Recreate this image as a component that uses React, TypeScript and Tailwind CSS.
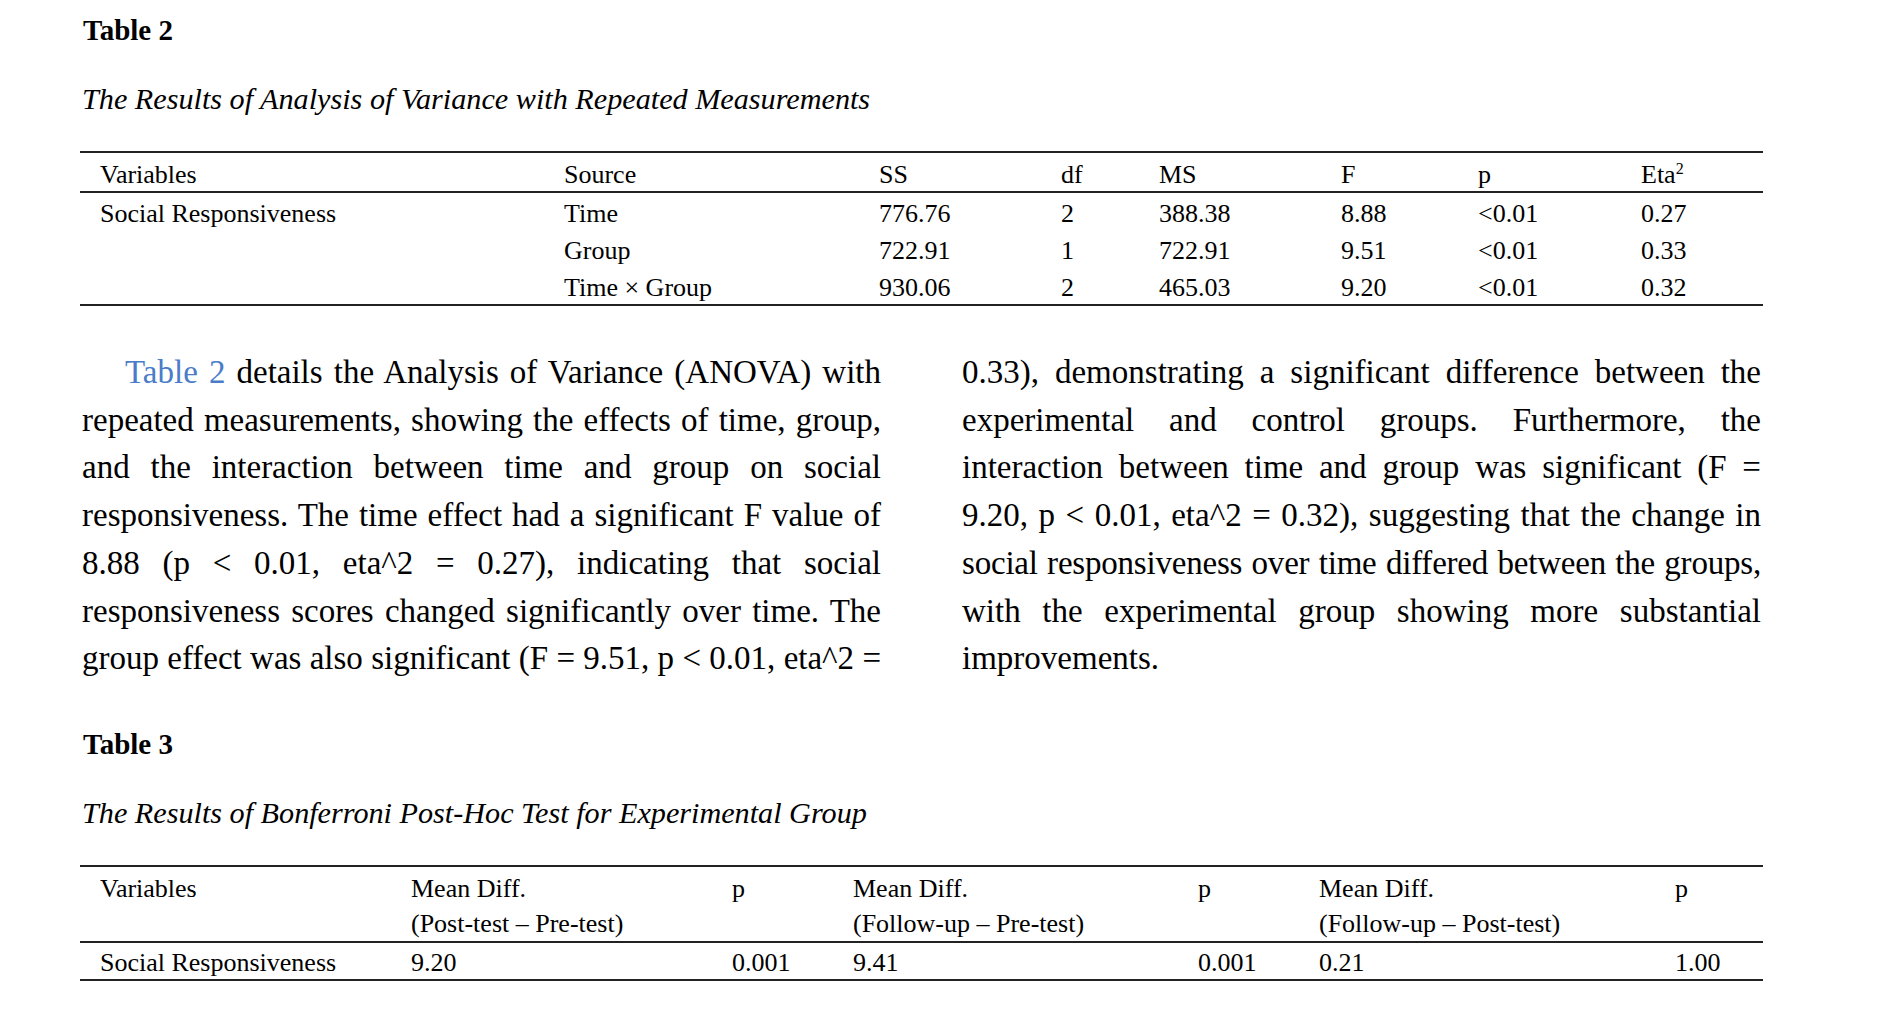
import React from "react";

const t2Header = ["Variables", "Source", "SS", "df", "MS", "F", "p"];
const t2Rows = [
  ["Social Responsiveness", "Time", "776.76", "2", "388.38", "8.88", "<0.01", "0.27"],
  ["", "Group", "722.91", "1", "722.91", "9.51", "<0.01", "0.33"],
  ["", "Time × Group", "930.06", "2", "465.03", "9.20", "<0.01", "0.32"],
];

const leftLines = [
  "details the Analysis of Variance (ANOVA) with",
  "repeated measurements, showing the effects of time, group,",
  "and the interaction between time and group on social",
  "responsiveness. The time effect had a significant F value of",
  "8.88 (p < 0.01, eta^2 = 0.27), indicating that social",
  "responsiveness scores changed significantly over time. The",
  "group effect was also significant (F = 9.51, p < 0.01, eta^2 =",
];

const rightLines = [
  "0.33), demonstrating a significant difference between the",
  "experimental and control groups. Furthermore, the",
  "interaction between time and group was significant (F =",
  "9.20, p < 0.01, eta^2 = 0.32), suggesting that the change in",
  "social responsiveness over time differed between the groups,",
  "with the experimental group showing more substantial",
];

export default function App() {
  return (
    <div className="w-[1900px] min-h-[1017px] bg-white text-black font-['Liberation_Serif','Times_New_Roman',serif]">
      <div className="ml-[80px] w-[1683px] pt-[14px]">
        {/* Table 2 */}
        <div className="pl-[3px] text-[29px] leading-[33px] font-bold">Table 2</div>
        <div className="mt-[35px] pl-[2px] text-[30.2px] leading-[34px] italic">
          The Results of Analysis of Variance with Repeated Measurements
        </div>
        <div className="mt-[35px] border-t-2 border-b-2 border-[#222] text-[26px] leading-[28px]">
          <div className="grid grid-cols-[464px_315px_182px_98px_182px_137px_163px_1fr] pl-[20px] h-[40px] pt-[8px] border-b-2 border-[#222]">
            {t2Header.map((h, i) => (
              <div key={i}>{h}</div>
            ))}
            <div>
              Eta<span className="relative -top-[9px] text-[16px]">2</span>
            </div>
          </div>
          {t2Rows.map((r, ri) => (
            <div
              key={ri}
              className="grid grid-cols-[464px_315px_182px_98px_182px_137px_163px_1fr] pl-[20px] h-[37px] pt-[7px]"
            >
              {r.map((c, ci) => (
                <div key={ci} className="whitespace-nowrap">{c}</div>
              ))}
            </div>
          ))}
        </div>

        {/* Paragraph */}
        <div className="mt-[43px] pl-[2px] grid grid-cols-[799px_799px] gap-x-[81px] text-[33px] leading-[47.7px]">
          <div>
            {leftLines.map((l, i) => (
              <div key={i} className={"text-justify [text-align-last:justify]" + (i === 0 ? " pl-[43px]" : "")}>
                {i === 0 && <span className="text-[#4a7cc9]">Table 2 </span>}
                {l}
              </div>
            ))}
          </div>
          <div>
            {rightLines.map((l, i) => (
              <div
                key={i}
                className={
                  "text-justify [text-align-last:justify] whitespace-nowrap" +
                  (i === 4 ? " [word-spacing:-3px] tracking-[-0.2px]" : "")
                }
              >
                {l}
              </div>
            ))}
            <div>improvements.</div>
          </div>
        </div>

        {/* Table 3 */}
        <div className="mt-[45.5px] pl-[3px] text-[29px] leading-[33px] font-bold">Table 3</div>
        <div className="mt-[35px] pl-[2px] text-[30.2px] leading-[34px] italic">
          The Results of Bonferroni Post-Hoc Test for Experimental Group
        </div>
        <div className="mt-[35px] border-t-2 border-b-2 border-[#222] text-[26px]">
          <div className="grid grid-cols-[311px_321px_121px_345px_121px_356px_1fr] pl-[20px] pt-[4px] leading-[35px] border-b-2 border-[#222]">
            <div>Variables</div>
            <div>
              Mean Diff.
              <br />
              (Post-test – Pre-test)
            </div>
            <div>p</div>
            <div>
              Mean Diff.
              <br />
              (Follow-up – Pre-test)
            </div>
            <div>p</div>
            <div>
              Mean Diff.
              <br />
              (Follow-up – Post-test)
            </div>
            <div>p</div>
          </div>
          <div className="grid grid-cols-[311px_321px_121px_345px_121px_356px_1fr] pl-[20px] h-[36px] pt-[6px] leading-[28px]">
            <div className="whitespace-nowrap">Social Responsiveness</div>
            <div>9.20</div>
            <div>0.001</div>
            <div>9.41</div>
            <div>0.001</div>
            <div>0.21</div>
            <div>1.00</div>
          </div>
        </div>
      </div>
    </div>
  );
}
